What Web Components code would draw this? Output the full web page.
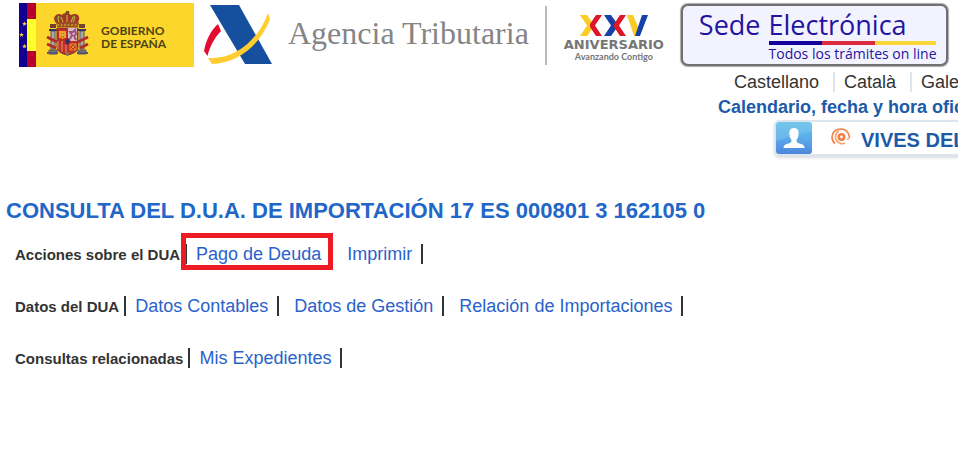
<!DOCTYPE html>
<html lang="es">
<head>
<meta charset="utf-8">
<title>Agencia Tributaria - Consulta del D.U.A.</title>
<style>
  body { margin: 0; background: #fff; color: #333; font-family: "Liberation Sans", Arial, sans-serif; }
</style>
</head>
<body>
<dua-page>
  <site-header slot="header">
    <gobierno-logo>Gobierno<br>de España</gobierno-logo>
    <agencia-logo>Agencia Tributaria</agencia-logo>
    <aniversario-logo>ANIVERSARIO<span slot="motto">Avanzando Contigo</span></aniversario-logo>
    <sede-logo><span slot="first">Sede</span><span slot="second">Electrónica</span><span slot="motto">Todos los trámites on line</span></sede-logo>
  </site-header>
  <user-tools slot="tools">
    <lang-menu slot="languages"><a href="#es">Castellano</a><a href="#ca">Català</a><a href="#gl">Galego</a></lang-menu>
    <a slot="calendar" href="#calendario">Calendario, fecha y hora oficial</a>
    <user-badge slot="user">VIVES DEL</user-badge>
  </user-tools>
  <h1 slot="title">CONSULTA DEL D.U.A. DE IMPORTACIÓN 17 ES 000801 3 162105 0</h1>
  <action-row label="Acciones sobre el DUA">
    <action-link href="#pago" first marked>Pago de Deuda</action-link>
    <action-link href="#imprimir">Imprimir</action-link>
  </action-row>
  <action-row label="Datos del DUA">
    <action-link href="#contables" first>Datos Contables</action-link>
    <action-link href="#gestion">Datos de Gestión</action-link>
    <action-link href="#relacion">Relación de Importaciones</action-link>
  </action-row>
  <action-row label="Consultas relacionadas">
    <action-link href="#expedientes" first>Mis Expedientes</action-link>
  </action-row>
</dua-page>

<script>
function define(name, html, setup) {
  customElements.define(name, class extends HTMLElement {
    constructor() {
      super();
      const t = document.createElement('template');
      t.innerHTML = html;
      this.attachShadow({ mode: 'open' }).append(t.content.cloneNode(true));
    }
    connectedCallback() { if (setup) setup(this, this.shadowRoot); }
  });
}

define('dua-page', `
<style>
  :host { display: block; }
  main { padding: 35px 6px 24px; }
  ::slotted(h1) { margin: 0 0 19px; font-size: 22px; line-height: 28px; color: #2266c8; }
</style>
<slot name="header"></slot>
<slot name="tools"></slot>
<main><slot name="title"></slot><slot></slot></main>`);

define('site-header', `
<style>
  :host { display: block; }
  header { display: flex; align-items: flex-start; padding: 3px 0 0 19px; }
</style>
<header><slot></slot></header>`);

define('gobierno-logo', `
<style>
  :host { display: flex; align-items: center; flex: none; width: 175px; height: 64px; background: #fcd62b; }
  svg { flex: none; width: 82px; height: 64px; }
  span { font: bold 12px/13px Lato, sans-serif; color: #4d4312; text-transform: uppercase; padding-top: 3px; white-space: nowrap; }
</style>
<svg viewBox="0 0 82 64" aria-hidden="true">
  <path fill="#12008f" d="M0 0h8v64H0z"/><path fill="#b8002c" d="M8 0h9v64H8z"/><path fill="#ffff2d" d="M8 16h9v32H8z"/>
  <g fill="#f1c843"><path id="st" d="M5.500 18.500l.7 1.400 1.600.2-1.200 1.100.3 1.600-1.400-.8-1.400.8.3-1.600-1.200-1.100 1.600-.2z"/><use href="#st" x="-3" y="11"/><use href="#st" y="22.500"/></g>
  <path fill="#9e3925" d="M37 20q-4-5 0-8 3-2 6 0 1-2 4-2t5 2q4-2 7 0 3 4-1 8z"/>
  <path fill="#4c6b45" d="M37 15l3-3 2 2-3 5zM57 15l-3-3-2 2 3 5z"/>
  <path stroke="#e9b936" fill="none" d="M40 19q-2-4 0-6M48 19v-8M54 19q3-4 1-6M44 19l-2-5M52 19l2-5"/>
  <path fill="#9b4e22" d="M37 19h23l-1 5H38z"/><path stroke="#e9be45" stroke-dasharray="2 1.500" d="M38 22h21"/>
  <path fill="#7b4b29" d="M47 8h3v4h-3z"/><path stroke="#6d5720" d="M48.500 8v4M46.500 9.500h4"/>
  <g stroke="#565661"><path fill="#aaa9a5" d="M32 28h4v18h-4zM61 28h4v18h-4z"/><path fill="#777" d="M30 47h8v4h-8zM59 47h8v4h-8z"/></g>
  <path fill="#73412e" d="M31 21h6v4h-6zM60 21h6v4h-6z"/><path stroke="#333663" stroke-width="2" d="M30 27h8M59 27h8"/>
  <path fill="none" stroke="#b32c2c" stroke-width="3" d="M28 34l10 5M28 41l9 4M69 34l-10 5M69 41l-8 4"/>
  <path stroke="#5a5670" stroke-width="2" d="M28 50h11M58 50h11"/>
  <path fill="#c12d26" stroke="#7b3d36" d="M38 25h21v19q0 6-10.500 8Q38 50 38 44z"/>
  <path fill="#d9bdc6" d="M49 25h9v13h-9z"/><path fill="none" stroke="#9e5180" stroke-width="2" d="M51 36l2-4-2-3h3l2-2 1 4-2 2 2 4"/>
  <path fill="none" stroke="#e9a42b" stroke-width="2" d="M41 35v-6h5v6M43.500 28v8M41 32h5"/>
  <path fill="#ca6945" d="M38 38h10v12q-10-2-10-6z"/><path stroke="#c92a2d" stroke-width="2" d="M41 38v10M45 38v12"/>
  <path fill="none" stroke="#e2912e" d="M51 41h6v6h-6zM51 41l6 6M57 41l-6 6"/>
  <ellipse cx="48.500" cy="38.500" rx="2.500" ry="3" fill="#303166" stroke="#a12734"/>
  <path fill="#8c7050" d="M46 49h5l-2 4h-1z"/>
</svg><span><slot></slot></span>`);

define('agencia-logo', `
<style>
  :host { display: flex; flex: none; gap: 16px; padding-left: 10px; height: 64px; color: #858585; }
  svg { flex: none; width: 68px; height: 64px; }
  span { font: 32px/38px "Liberation Serif", serif; padding-top: 11px; white-space: nowrap; }
</style>
<svg viewBox="0 0 68 64" aria-hidden="true">
  <path fill="#154f9e" d="M6 2h29l33 59H41z"/>
  <path fill="#e30b31" d="M14 21l3 7C11 34 6 43 3.500 53L0 48C2 37 7 27 14 21z"/>
  <path fill="#ffcd2f" d="M64 10l2 6C57 40 36 60 8 61L4 55C30 57 54 38 64 10z"/>
</svg><span><slot></slot></span>`);

define('aniversario-logo', `
<style>
  :host { display: flex; flex-direction: column; align-items: center; flex: none; box-sizing: border-box; width: 136px; height: 59px; margin: 3px 0 0 16px; padding-top: 9px; border-left: 2px solid #bbb; color: #767676; }
  svg { width: 68px; height: 21px; }
  .name { font: bold 13px/14px "DejaVu Sans", sans-serif; padding-top: 2px; }
  .motto { font: bold 9px/10px Lato, sans-serif; white-space: nowrap; }
</style>
<svg viewBox="0 0 68 21" aria-hidden="true">
  <path fill="#fbcc25" d="M0 0h7l5 7v7l-5 7H0l7-10.500z"/><path fill="#dd182b" d="M22 0h-6l-6 9v3l6 9h6l-7-10.500z"/>
  <path fill="#1740a8" d="M24 0h7l5 7v7l-5 7h-7l7-10.500z"/><path fill="#dd182b" d="M46 0h-6l-6 9v3l6 9h6l-7-10.500z"/>
  <path fill="#fbcc25" d="M47 0h6l6 14-2 7h-3z"/><path fill="#1740a8" d="M62 0h6l-8 21h-5z"/>
</svg>
<span class="name"><slot></slot></span><span class="motto"><slot name="motto"></slot></span>`);

define('sede-logo', `
<style>
  :host { display: grid; grid-template-columns: auto auto; column-gap: 8px; align-content: start; flex: none; box-sizing: border-box; height: 62px; padding: 2px 9px 0 16px; border: 2px solid #707074; border-radius: 7px; box-shadow: 0 0 1px 1px #aaa; background: #f3f3ff; color: #2414a0; font-family: "Open Sans", "Noto Sans", sans-serif; margin-top: 1px; white-space: nowrap; }
  .big { font-size: 27px; line-height: 33px; }
  .bar, .motto { grid-column: 2; }
  .bar { height: 4px; display: grid; grid-template-columns: 52fr 51fr 60fr; }
  .bar i:nth-child(1) { background: #12009a; } .bar i:nth-child(2) { background: #dc2b40; } .bar i:nth-child(3) { background: #fad637; }
  .motto { font-size: 14px; line-height: 18px; }
</style>
<span class="big"><slot name="first"></slot></span><span class="big"><slot name="second"></slot></span>
<div class="bar"><i></i><i></i><i></i></div><span class="motto"><slot name="motto"></slot></span>`);

define('user-tools', `
<style>
  :host { display: flex; justify-content: flex-end; }
  div { width: 240px; padding-bottom: 6px; overflow: hidden; display: flex; flex-direction: column; align-items: flex-start; white-space: nowrap; }
  slot[name=languages]::slotted(*) { margin: 5px 0 0 16px; }
  slot[name=calendar]::slotted(a) { font-weight: bold; font-size: 18px; line-height: 20px; color: #1b5ba8; text-decoration: none; margin: 5px 0 3px; }
  slot[name=user]::slotted(*) { margin-left: 56px; }
</style>
<div><slot name="languages"></slot><slot name="calendar"></slot><slot name="user"></slot></div>`);

define('lang-menu', `
<style>
  :host { display: block; }
  nav { display: flex; }
  ::slotted(a) { font-size: 18px; line-height: 20px; color: #333; text-decoration: none; padding-right: 14px; margin-right: 9px; border-right: 2px solid #dde6ef; }
</style>
<nav aria-label="Idioma"><slot></slot></nav>`);

define('user-badge', `
<style>
  :host { display: flex; align-items: center; box-sizing: border-box; width: 240px; height: 36px; border: 2px solid #dde6ef; border-radius: 5px; box-shadow: 0 2px 3px #ddd; font-weight: bold; font-size: 20px; line-height: 24px; color: #1b5ba8; }
  svg { flex: none; }
  .at { margin: 0 10px 2px 19px; }
  span { padding-top: 4px; }
</style>
<svg width="36" height="32" viewBox="0 0 36 32" aria-hidden="true">
  <defs><linearGradient id="g" x2="0" y2="1"><stop stop-color="#5fc0e8"/><stop offset=".5" stop-color="#5aacea"/><stop offset="1" stop-color="#4f86db"/></linearGradient></defs>
  <rect width="36" height="32" rx="3" fill="url(#g)"/><path fill="#fff" opacity=".12" d="M0 0h36v10Q20 12 0 19z"/>
  <path fill="#fff" d="M18 6c4 0 5 3 4.500 7-.3 3-1.500 4-2 5 0 3 1.500 3 5 4 2 .7 3 2 3 4h-21c0-2 1-3.300 3-4 3.500-1 5-1 5-4-.5-1-1.700-2-2-5C13 9 14 6 18 6z"/>
</svg>
<svg class="at" width="20" height="18" viewBox="0 0 20 18" fill="none" stroke="#f47f40" aria-hidden="true">
  <circle cx="10.500" cy="9" r="2.700" stroke-width="2.600"/>
  <path stroke-width="1.600" d="M18.500 9C18 4 14 1 10 1 5 1 1 4 1 9c0 3 1 5 3 6.500"/>
  <path stroke-width="1.600" stroke="#f7a172" d="M8 3Q4.500 5 4.500 9t4 6q3 1.500 5.500 0M18.500 9q-.5 2-2.500 2.500"/>
</svg>
<span><slot></slot></span>`);

define('action-row', `
<style>
  :host { display: block; margin: 0 0 30px 9px; }
  nav { display: flex; flex-wrap: wrap; line-height: 20px; }
  b { font-size: 15px; line-height: 22px; margin-right: 5px; }
</style>
<nav><b></b><slot></slot></nav>`, (el, root) => {
  const label = el.getAttribute('label');
  root.querySelector('b').textContent = label;
  root.querySelector('nav').setAttribute('aria-label', label);
});

define('action-link', `
<style>
  :host { display: block; position: relative; height: 20px; padding-right: 9px; margin-left: 15px; border-right: 2px solid #333; white-space: nowrap; }
  :host([first]) { margin-left: 0; padding-left: 9px; border-left: 2px solid #333; }
  :host([marked])::after { content: ""; position: absolute; inset: -11px -3px -6px -6px; border: 5px solid #ed1c24; pointer-events: none; }
  a { font-size: 18px; line-height: 20px; color: #2a62cb; text-decoration: none; }
</style>
<a><slot></slot></a>`, (el, root) => root.querySelector('a').setAttribute('href', el.getAttribute('href')));
</script>
</body>
</html>
